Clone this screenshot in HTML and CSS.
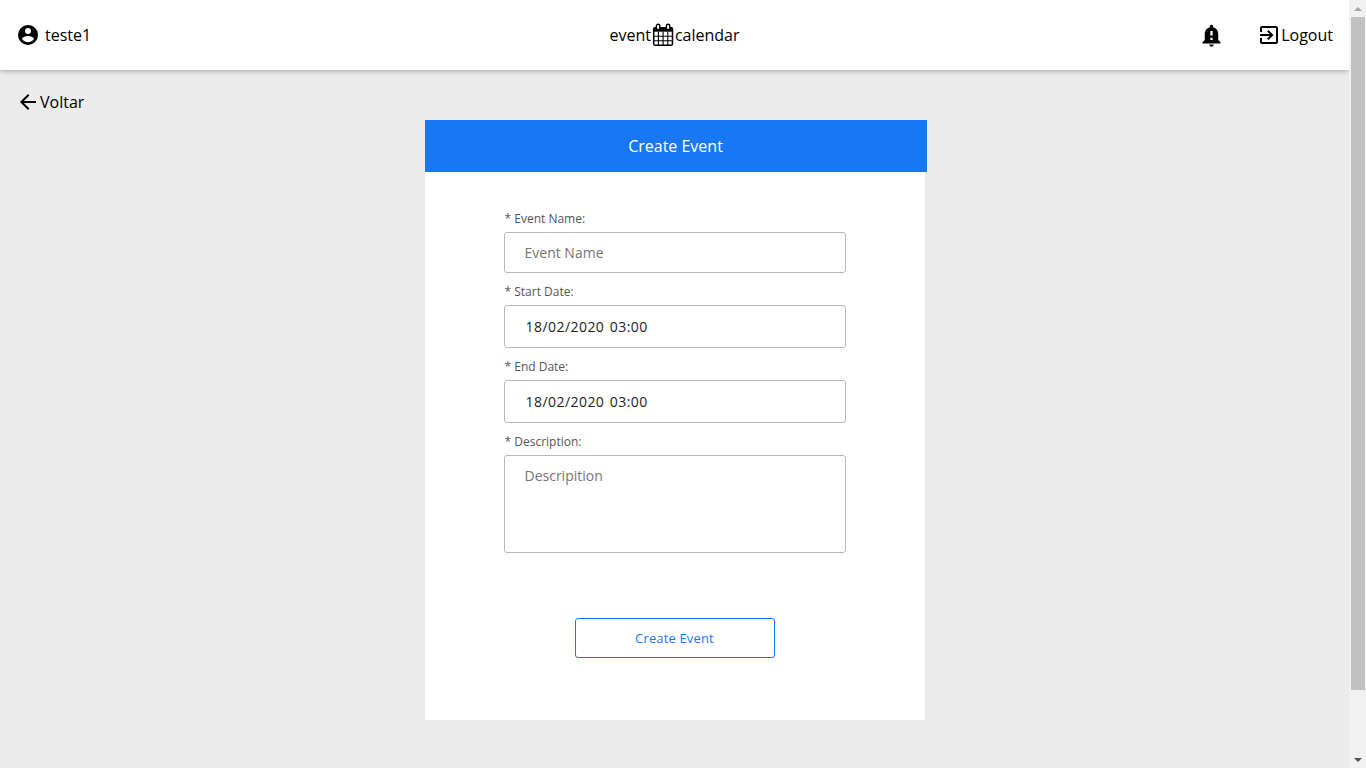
FILE: index.html
```html
<!DOCTYPE html>
<html lang="en">
<head>
  <meta charset="UTF-8" />
  <title>Event Calendar</title>
  <link rel="stylesheet" href="styles.css">
</head>
<body>
  <div class="page">
    <header class="topbar">
      <div class="user">
        <svg class="icon-user" viewBox="0 0 24 24"><path d="M12,19.2C9.5,19.2 7.29,17.92 6,16C6.03,14 10,12.9 12,12.9C14,12.9 17.97,14 18,16C16.71,17.92 14.5,19.2 12,19.2M12,5A3,3 0 0,1 15,8A3,3 0 0,1 12,11A3,3 0 0,1 9,8A3,3 0 0,1 12,5M12,2A10,10 0 0,0 2,12A10,10 0 0,0 12,22A10,10 0 0,0 22,12C22,6.47 17.5,2 12,2Z"/></svg>
        <span>teste1</span>
      </div>
      <div class="logo">
        <span>event</span>
        <svg class="icon-calendar" viewBox="0 0 24 24">
          <rect x="2.7" y="4.7" width="18.8" height="17.6" rx="1.6" fill="none" stroke="#000" stroke-width="1.5"/>
          <rect x="2.7" y="4.7" width="18.8" height="4" fill="#000"/>
          <path d="M2.7 13.2h18.8M2.7 17.8h18.8M7.4 8.7v13.6M12.1 8.7v13.6M16.8 8.7v13.6" fill="none" stroke="#000" stroke-width="1.1"/>
          <rect x="5.4" y="1.2" width="3.4" height="5.6" rx="1.7" fill="#fff" stroke="#000" stroke-width="1.4"/>
          <rect x="15.4" y="1.2" width="3.4" height="5.6" rx="1.7" fill="#fff" stroke="#000" stroke-width="1.4"/>
        </svg>
        <span>calendar</span>
      </div>
      <div class="actions">
        <svg class="icon-bell" viewBox="0 0 24 24"><path d="M18 16v-5c0-3.07-1.64-5.64-4.5-6.32V4c0-.83-.67-1.5-1.5-1.5s-1.5.67-1.5 1.5v.68C7.63 5.36 6 7.92 6 11v5l-2 2v1h16v-1l-2-2zm-5 0h-2v-2h2v2zm0-4h-2V8h2v4zm-1 10c1.1 0 2-.9 2-2h-4c0 1.1.89 2 2 2z"/></svg>
        <div class="logout">
          <svg class="icon-logout" viewBox="0 0 24 24"><path d="M10.09 15.59L11.5 17l5-5-5-5-1.41 1.41L12.67 11H3v2h9.67l-2.58 2.59zM19 3H5c-1.11 0-2 .9-2 2v4h2V5h14v14H5v-4H3v4c0 1.1.89 2 2 2h14c1.1 0 2-.9 2-2V5c0-1.1-.9-2-2-2z"/></svg>
          <span>Logout</span>
        </div>
      </div>
    </header>

    <main class="content">
      <a class="back">
        <svg class="icon-back" viewBox="0 0 24 24"><path d="M20 11H7.83l5.59-5.59L12 4l-8 8 8 8 1.41-1.41L7.83 13H20v-2z"/></svg>
        <span>Voltar</span>
      </a>

      <section class="card">
        <h1 class="card-title">Create Event</h1>
        <form class="event-form">
          <div class="form-group">
            <label for="name">* Event Name:</label>
            <div id="name" class="field field-name placeholder">Event Name</div>
          </div>
          <div class="form-group">
            <label for="start">* Start Date:</label>
            <div id="start" class="field field-date">18/02/2020 03:00</div>
          </div>
          <div class="form-group">
            <label for="end">* End Date:</label>
            <div id="end" class="field field-date">18/02/2020 03:00</div>
          </div>
          <div class="form-group">
            <label for="desc">* Description:</label>
            <div id="desc" class="field field-area placeholder">Descripition</div>
          </div>
          <button type="button" class="submit">Create Event</button>
        </form>
      </section>
    </main>
  </div>

  <div class="scrollbar">
    <div class="scroll-btn"><span class="arrow-up"></span></div>
    <div class="scroll-track"><div class="scroll-thumb"></div></div>
    <div class="scroll-btn"><span class="arrow-down"></span></div>
  </div>
</body>
</html>
```

FILE: styles.css
```css
:root {
  --primary: #1877f2;
  --bg: #ebebeb;
  --border: #b8b8b8;
  --text: #000;
}
html, body { height: 100%; }
body {
  margin: 0;
  display: flex;
  overflow: hidden;
  font-family: "Open Sans", sans-serif;
  background: var(--bg);
  color: var(--text);
}
.page {
  flex: 1;
  min-width: 0;
  display: flex;
  flex-direction: column;
}

/* top bar */
.topbar {
  height: 70px;
  flex-shrink: 0;
  display: grid;
  grid-template-columns: 1fr auto 1fr;
  align-items: center;
  padding: 0 16px;
  background: #fff;
  box-shadow: 0 1px 5px rgba(0, 0, 0, 0.3);
  font-size: 16px;
}
.user, .logo, .logout, .actions, .back { display: flex; align-items: center; }
.user { gap: 5px; }
.icon-user { width: 24px; height: 24px; }
.icon-calendar { width: 24px; height: 24px; }
.actions { gap: 32px; justify-content: flex-end; }
.icon-bell { width: 27px; height: 27px; }
.icon-logout { width: 24px; height: 24px; }

/* content */
.content {
  flex: 1;
  display: flex;
  flex-direction: column;
  align-items: center;
}
.back {
  align-self: flex-start;
  height: 24px;
  margin: 20px 0 6px 16px;
  font-size: 16px;
}
.icon-back { width: 24px; height: 24px; }

.card {
  width: 500px;
  height: 600px;
  background: #fff;
}
.card-title {
  width: 502px;
  height: 52px;
  margin: 0;
  background: var(--primary);
  color: #fff;
  font-size: 16px;
  font-weight: 400;
  line-height: 52px;
  text-align: center;
}
.event-form {
  display: flex;
  flex-direction: column;
  width: 342px;
  margin: 0 auto;
  padding-top: 37px;
}
.form-group { margin-bottom: 9px; }
.form-group label {
  display: block;
  height: 23px;
  padding-left: 1px;
  color: #555;
  font-size: 12px;
  line-height: 20px;
}
.field {
  box-sizing: border-box;
  border: 1px solid var(--border);
  border-radius: 3px;
  background: #fff;
  font-size: 14px;
  padding-left: 20px;
}
.field-name { height: 41px; line-height: 39px; }
.field-date {
  height: 43px;
  line-height: 41px;
  padding-left: 21px;
  color: #222;
  letter-spacing: 0.45px;
  word-spacing: 1.4px;
}
.field-area { height: 98px; padding-top: 10px; line-height: 20px; }
.placeholder { color: #757575; }
.submit {
  align-self: center;
  width: 200px;
  height: 40px;
  margin-top: 56px;
  border: 1px solid var(--primary);
  border-radius: 3px;
  background: #fff;
  color: var(--primary);
  font-family: inherit;
  font-size: 13px;
  letter-spacing: 0.15px;
}

/* scrollbar drawn by hand so it always shows */
.scrollbar {
  width: 17px;
  flex-shrink: 0;
  display: flex;
  flex-direction: column;
  background: #f1f1f1;
}
.scroll-btn {
  height: 17px;
  display: flex;
  align-items: center;
  justify-content: center;
}
.arrow-up, .arrow-down {
  border-left: 4px solid transparent;
  border-right: 4px solid transparent;
}
.arrow-up { border-bottom: 4px solid #a3a3a3; }
.arrow-down { border-top: 4px solid #505050; }
.scroll-track { flex: 1; padding: 0 1px 0 2px; }
.scroll-thumb { height: 673px; background: #c1c1c1; }
```
